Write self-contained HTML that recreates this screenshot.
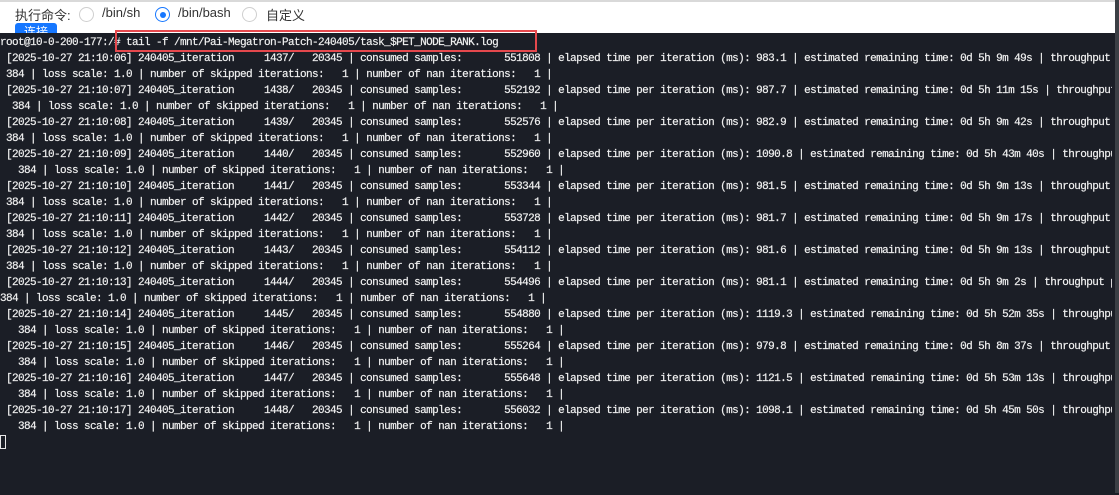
<!DOCTYPE html>
<html><head><meta charset="utf-8"><style>
body{margin:0;width:1119px;height:493px;overflow:hidden;background:#1b1e26;position:relative;font-family:"Liberation Sans","Noto Sans CJK SC",sans-serif}
.hdr{position:absolute;left:0;top:0;width:1115px;height:33px;background:#fff;border-top:2px solid #d9d9d9;box-sizing:border-box}
.lbl{position:absolute;top:3px;font-size:13px;color:#333}
.rad{position:absolute;top:5px;width:15px;height:15px;border:1px solid #cfcfcf;border-radius:50%;box-sizing:border-box;background:#fff}
.rad.on{border-color:#1677ff}
.rad.on:after{content:"";position:absolute;left:3.5px;top:3.5px;width:6px;height:6px;border-radius:50%;background:#1677ff}
.btn{position:absolute;left:15px;top:23px;width:42px;height:14px;background:#1677ff;border-radius:3px 3px 0 0;color:#fff;font-size:12px;text-align:center;line-height:18px;overflow:hidden}
.term{position:absolute;left:0;top:33px;width:1112px;height:460px;background:#1b1e26;overflow:hidden;padding-top:2px}
pre{margin:0;font-family:"Liberation Mono",monospace;font-size:11px;letter-spacing:-0.6px;line-height:16px;color:#f0f0f0;white-space:pre;-webkit-text-stroke:0.2px #f0f0f0}
.box{position:absolute;left:115px;top:30px;width:422px;height:22px;border:2px solid #e5484d;box-sizing:border-box}
.sb{position:absolute;right:0;top:0;width:4px;height:493px;background:#3c3f45}
.cur{display:inline-block;width:4px;height:12px;border:1px solid #e8e8e8;vertical-align:-2px}
</style></head><body>
<div class="hdr">
<span class="lbl" style="left:15px">执行命令:</span>
<span class="rad" style="left:79px"></span><span class="lbl" style="left:102px">/bin/sh</span>
<span class="rad on" style="left:155px"></span><span class="lbl" style="left:178px">/bin/bash</span>
<span class="rad" style="left:242px"></span><span class="lbl" style="left:266px">自定义</span>
</div>
<div class="btn">连接</div>
<div class="term"><pre>root@10-0-200-177:/# tail -f /mnt/Pai-Megatron-Patch-240405/task_$PET_NODE_RANK.log
 [2025-10-27 21:10:06] 240405_iteration     1437/   20345 | consumed samples:       551808 | elapsed time per iteration (ms): 983.1 | estimated remaining time: 0d 5h 9m 49s | throughput
 384 | loss scale: 1.0 | number of skipped iterations:   1 | number of nan iterations:   1 |
 [2025-10-27 21:10:07] 240405_iteration     1438/   20345 | consumed samples:       552192 | elapsed time per iteration (ms): 987.7 | estimated remaining time: 0d 5h 11m 15s | throughput
  384 | loss scale: 1.0 | number of skipped iterations:   1 | number of nan iterations:   1 |
 [2025-10-27 21:10:08] 240405_iteration     1439/   20345 | consumed samples:       552576 | elapsed time per iteration (ms): 982.9 | estimated remaining time: 0d 5h 9m 42s | throughput
 384 | loss scale: 1.0 | number of skipped iterations:   1 | number of nan iterations:   1 |
 [2025-10-27 21:10:09] 240405_iteration     1440/   20345 | consumed samples:       552960 | elapsed time per iteration (ms): 1090.8 | estimated remaining time: 0d 5h 43m 40s | throughpu
   384 | loss scale: 1.0 | number of skipped iterations:   1 | number of nan iterations:   1 |
 [2025-10-27 21:10:10] 240405_iteration     1441/   20345 | consumed samples:       553344 | elapsed time per iteration (ms): 981.5 | estimated remaining time: 0d 5h 9m 13s | throughput
 384 | loss scale: 1.0 | number of skipped iterations:   1 | number of nan iterations:   1 |
 [2025-10-27 21:10:11] 240405_iteration     1442/   20345 | consumed samples:       553728 | elapsed time per iteration (ms): 981.7 | estimated remaining time: 0d 5h 9m 17s | throughput
 384 | loss scale: 1.0 | number of skipped iterations:   1 | number of nan iterations:   1 |
 [2025-10-27 21:10:12] 240405_iteration     1443/   20345 | consumed samples:       554112 | elapsed time per iteration (ms): 981.6 | estimated remaining time: 0d 5h 9m 13s | throughput
 384 | loss scale: 1.0 | number of skipped iterations:   1 | number of nan iterations:   1 |
 [2025-10-27 21:10:13] 240405_iteration     1444/   20345 | consumed samples:       554496 | elapsed time per iteration (ms): 981.1 | estimated remaining time: 0d 5h 9m 2s | throughput p
384 | loss scale: 1.0 | number of skipped iterations:   1 | number of nan iterations:   1 |
 [2025-10-27 21:10:14] 240405_iteration     1445/   20345 | consumed samples:       554880 | elapsed time per iteration (ms): 1119.3 | estimated remaining time: 0d 5h 52m 35s | throughpu
   384 | loss scale: 1.0 | number of skipped iterations:   1 | number of nan iterations:   1 |
 [2025-10-27 21:10:15] 240405_iteration     1446/   20345 | consumed samples:       555264 | elapsed time per iteration (ms): 979.8 | estimated remaining time: 0d 5h 8m 37s | throughput
   384 | loss scale: 1.0 | number of skipped iterations:   1 | number of nan iterations:   1 |
 [2025-10-27 21:10:16] 240405_iteration     1447/   20345 | consumed samples:       555648 | elapsed time per iteration (ms): 1121.5 | estimated remaining time: 0d 5h 53m 13s | throughpu
   384 | loss scale: 1.0 | number of skipped iterations:   1 | number of nan iterations:   1 |
 [2025-10-27 21:10:17] 240405_iteration     1448/   20345 | consumed samples:       556032 | elapsed time per iteration (ms): 1098.1 | estimated remaining time: 0d 5h 45m 50s | throughpu
   384 | loss scale: 1.0 | number of skipped iterations:   1 | number of nan iterations:   1 |
<span class="cur"></span></pre></div>
<div class="box"></div>
<div class="sb"></div>
</body></html>
